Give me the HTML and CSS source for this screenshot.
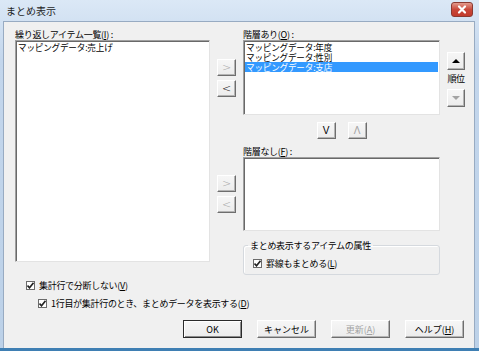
FILE: index.html
```html
<!DOCTYPE html>
<html lang="ja">
<head>
  <meta charset="UTF-8">
  <title>まとめ表示</title>
  <link rel="stylesheet" href="styles.css">
</head>
<body>
  <div class="window">
    <div class="titlebar">
      <span class="title">まとめ表示</span>
      <span class="close-btn">
        <svg width="20" height="13" viewBox="0 0 20 13">
          <path d="M7 3.5 L13 9.5 M13 3.5 L7 9.5" stroke="#fff" stroke-width="2.2" stroke-linecap="round"/>
        </svg>
      </span>
    </div>
    <div class="client">
      <div class="main">
        <div class="col-left">
          <div class="label">繰り返しアイテム一覧(<u>I</u>) :</div>
          <div class="listbox list-tall">
            <div class="item">マッピングデータ:売上げ</div>
          </div>
        </div>
        <div class="col-move">
          <button class="btn small disabled move-first">&gt;</button>
          <button class="btn small">&lt;</button>
          <button class="btn small disabled move-second">&gt;</button>
          <button class="btn small disabled">&lt;</button>
        </div>
        <div class="col-right">
          <div class="label">階層あり(<u>O</u>) :</div>
          <div class="listbox list-top">
            <div class="item">マッピングデータ:年度</div>
            <div class="item">マッピングデータ:性別</div>
            <div class="item selected">マッピングデータ:支店</div>
          </div>
          <div class="updown-row">
            <button class="btn small letter">V</button>
            <button class="btn small letter disabled">Λ</button>
          </div>
          <div class="label label-second">階層なし(<u>F</u>) :</div>
          <div class="listbox list-bottom"></div>
          <fieldset class="group">
            <legend>まとめ表示するアイテムの属性</legend>
            <div class="check-row">
              <span class="checkbox"><svg width="7" height="7" viewBox="0 0 7 7"><path d="M0.5 3.5 L2.5 5.8 L6.5 0.8" fill="none" stroke="#222" stroke-width="1.6"/></svg></span>
              <span>罫線もまとめる(<u>L</u>)</span>
            </div>
          </fieldset>
        </div>
        <div class="col-order">
          <button class="btn order-btn"><span class="tri-up"></span></button>
          <div class="order-label">順位</div>
          <button class="btn order-btn"><span class="tri-down"></span></button>
        </div>
      </div>
      <div class="check-row check-first">
        <span class="checkbox"><svg width="7" height="7" viewBox="0 0 7 7"><path d="M0.5 3.5 L2.5 5.8 L6.5 0.8" fill="none" stroke="#222" stroke-width="1.6"/></svg></span>
        <span>集計行で分断しない(<u>V</u>)</span>
      </div>
      <div class="check-row check-second">
        <span class="checkbox"><svg width="7" height="7" viewBox="0 0 7 7"><path d="M0.5 3.5 L2.5 5.8 L6.5 0.8" fill="none" stroke="#222" stroke-width="1.6"/></svg></span>
        <span>1行目が集計行のとき、まとめデータを表示する(<u>D</u>)</span>
      </div>
      <div class="button-row">
        <button class="btn push default">OK</button>
        <button class="btn push">キャンセル</button>
        <button class="btn push disabled">更新(<u>A</u>)</button>
        <button class="btn push">ヘルプ(<u>H</u>)</button>
      </div>
    </div>
  </div>
</body>
</html>
```

FILE: styles.css
```css
:root {
  --face: #f0f0f0;
  --disabled: #a3a3a3;
  --select: #3399ff;
}
html, body {
  margin: 0;
  padding: 0;
  background: #fff;
  font-family: "Noto Sans CJK JP", "Noto Sans", sans-serif;
  font-size: 9px;
  color: #000;
}
u { text-decoration: underline; text-underline-offset: 1px; }
.window {
  width: 479px;
  height: 351px;
  box-sizing: border-box;
  display: flex;
  flex-direction: column;
  padding: 0 4px 0 3px;
  background: linear-gradient(#dbe8f6, #c3d6ec 60px, #bcd1e8);
  border-bottom: 3px solid #3f7fb3;
}
.titlebar {
  height: 21px;
  display: flex;
  align-items: center;
  justify-content: space-between;
  padding-left: 3px;
}
.title {
  font-size: 10px;
  line-height: 12px;
  color: #1e1e1e;
}
.close-btn {
  width: 20px;
  height: 13px;
  margin-right: 2px;
  margin-top: -2px;
  border-radius: 3px;
  border: 1px solid #8a3a32;
  background: linear-gradient(#e39a8d, #c9483a 50%, #c23a2c);
  display: flex;
}
.client {
  flex: 1;
  background: var(--face);
  border: 1px solid #98abc2;
  border-bottom: none;
  padding: 7px 0 0 11px;
}
.main {
  display: flex;
  align-items: flex-start;
}
.label {
  line-height: 11px;
  height: 11px;
  white-space: nowrap;
  letter-spacing: -0.3px;
}
.listbox {
  box-sizing: border-box;
  background: #fff;
  border: 1px solid;
  border-color: #a0a0a0 #e3e3e3 #e3e3e3 #a0a0a0;
  box-shadow: inset 1px 1px 0 #696969;
  padding: 1px 1px;
}
.item {
  font-size: 8.6px;
  line-height: 10px;
  height: 10px;
  padding-left: 1px;
  white-space: nowrap;
  letter-spacing: -0.2px;
}
.item.selected {
  background: var(--select);
  color: #fff;
}
.col-left { width: 195px; }
.list-tall { height: 222px; }
.col-move {
  width: 19px;
  margin-left: 7px;
  display: flex;
  flex-direction: column;
  gap: 4px;
}
.move-first { margin-top: 30px; }
.move-second { margin-top: 74px; }
.btn {
  font-family: "Liberation Sans", "Noto Sans CJK JP", sans-serif;
  box-sizing: border-box;
  background: linear-gradient(#f6f6f6, #ececec);
  border: 1px solid;
  border-color: #fff #6e6e6e #6e6e6e #fff;
  box-shadow: inset -1px -1px 0 #b4b4b4;
  padding: 0;
  color: #000;
  display: flex;
  align-items: center;
  justify-content: center;
}
.btn.disabled { color: var(--disabled); }
.btn.small {
  width: 19px;
  height: 17px;
  font-family: "DejaVu Sans", sans-serif;
  font-size: 11px;
  line-height: 13px;
  font-weight: 300;
}
.btn.letter { font-family: "Liberation Sans", sans-serif; font-size: 10px; }
.col-right {
  width: 197px;
  margin-left: 7px;
  display: flex;
  flex-direction: column;
}
.list-top { height: 75px; }
.updown-row {
  display: flex;
  justify-content: center;
  gap: 12px;
  margin-top: 7px;
}
.label-second { margin-top: 7px; }
.list-bottom { height: 74px; }
.group {
  margin: 9px 0 0;
  padding: 0 0 5px 4px;
  border: 1px solid #d5d9de;
  border-radius: 3px;
  box-shadow: inset 1px 1px 0 #fff;
}
.group legend {
  padding: 0 2px;
  line-height: 11px;
  letter-spacing: -0.3px;
}
.group .check-row {
  margin: 6px 0 0 5px;
}
.col-order {
  width: 18px;
  margin-left: 7px;
  padding-top: 23px;
  display: flex;
  flex-direction: column;
  align-items: center;
}
.order-btn {
  width: 18px;
  height: 18px;
}
.order-label {
  line-height: 13px;
  margin: 2px 0 4px;
  white-space: nowrap;
  letter-spacing: -0.5px;
}
.tri-up, .tri-down {
  width: 0;
  height: 0;
  border-left: 4px solid transparent;
  border-right: 4px solid transparent;
}
.tri-up { border-bottom: 4px solid #000; }
.tri-down { border-top: 4px solid var(--disabled); }
.check-row {
  display: flex;
  align-items: center;
  gap: 4px;
  height: 12px;
  white-space: nowrap;
  letter-spacing: -0.3px;
}
.check-first { margin: 4px 0 0 11px; }
.check-second { margin: 6px 0 0 23px; }
.checkbox {
  width: 9px;
  height: 9px;
  box-sizing: border-box;
  border: 1px solid #6b6b6b;
  background: #fff;
  display: flex;
  align-items: center;
  justify-content: center;
}
.button-row {
  display: flex;
  gap: 15px;
  margin: 11px 0 0 168px;
}
.btn.push {
  width: 59px;
  height: 18px;
  font-family: "Noto Sans CJK JP", sans-serif;
  font-size: 9px;
}
.btn.push.default {
  border-color: #2b2b2b;
  box-shadow: inset 1px 1px 0 #fff, inset -1px -1px 0 #8a8a8a;
}
```
